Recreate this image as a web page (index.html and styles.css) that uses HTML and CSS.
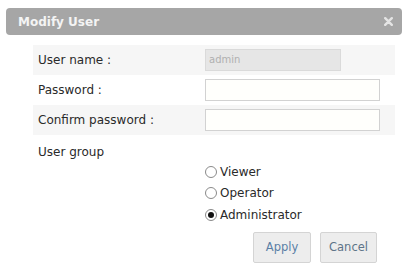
FILE: index.html
```html
<!DOCTYPE html>
<html lang="en">
<head>
    <meta charset="UTF-8">
    <title>Modify User</title>
    <link rel="stylesheet" href="styles.css">
</head>
<body>
    <div class="dialog">
        <div class="titlebar">
            <span class="title">Modify User</span>
            <span class="close">
                <svg width="9" height="9" viewBox="0 0 9 9"><path d="M1.2 1.2 L7.8 7.8 M7.8 1.2 L1.2 7.8" stroke="#e4e4e4" stroke-width="2.4" stroke-linecap="round"/></svg>
            </span>
        </div>
        <div class="form">
            <div class="row shade">
                <label>User name :</label>
                <div class="input readonly">admin</div>
            </div>
            <div class="row">
                <label>Password :</label>
                <div class="input"></div>
            </div>
            <div class="row shade">
                <label>Confirm password :</label>
                <div class="input"></div>
            </div>
            <div class="group">
                <label>User group</label>
                <div class="radios">
                    <div class="radio"><span class="dot"></span>Viewer</div>
                    <div class="radio"><span class="dot"></span>Operator</div>
                    <div class="radio"><span class="dot checked"></span>Administrator</div>
                </div>
            </div>
            <div class="buttons">
                <button class="btn apply">Apply</button>
                <button class="btn">Cancel</button>
            </div>
        </div>
    </div>
</body>
</html>
```

FILE: styles.css
```css
body {
    margin: 0;
    background-color: #fff;
    font-family: "DejaVu Sans", Verdana, sans-serif;
    font-size: 12px;
    color: #2a2a2a;
}

.dialog {
    margin: 8px 5px 0 6px;
}

.titlebar {
    height: 27px;
    background-color: #a6a6a6;
    border-radius: 4px;
    display: flex;
    align-items: center;
    justify-content: space-between;
    padding: 0 9px 0 12px;
}

.title {
    color: #f4f4f4;
    font-weight: bold;
    font-size: 12px;
}

.close svg {
    display: block;
}

.form {
    padding: 10px 7px 0 27px;
}

.row {
    display: flex;
    align-items: center;
    height: 30px;
    padding-left: 5px;
}

.row.shade {
    background-color: #f6f6f6;
}

.row label {
    width: 167px;
}

.input {
    width: 173px;
    height: 20px;
    border: 1px solid #d2d2d2;
    background-color: #fffffc;
}

.input.readonly {
    width: 131px;
    padding-left: 3px;
    background-color: #e6e6e6;
    border-color: #dadada;
    color: #b0b0b0;
    font-size: 10px;
    line-height: 20px;
}

.group {
    padding: 9px 0 0 5px;
}

.group label {
    display: block;
    line-height: 17px;
}

.radios {
    margin-left: 167px;
}

.radio {
    display: flex;
    align-items: center;
    height: 21.5px;
}

.dot {
    width: 10px;
    height: 10px;
    border: 1px solid #8a8a8a;
    border-radius: 50%;
    margin-right: 3px;
    display: flex;
    align-items: center;
    justify-content: center;
    background-color: #fff;
}

.dot.checked::after {
    content: "";
    width: 6px;
    height: 6px;
    border-radius: 50%;
    background-color: #111;
}

.buttons {
    display: flex;
    justify-content: flex-end;
    gap: 9px;
    margin-top: 6px;
    padding-right: 18px;
}

.btn {
    font-family: "DejaVu Sans", Verdana, sans-serif;
    font-size: 11.5px;
    height: 31px;
    width: 57px;
    background-color: #ededed;
    border: 1px solid #d4d4d4;
    border-radius: 2px;
    color: #5e7488;
}

.btn.apply {
    width: 58px;
    color: #5b7fa6;
}
```
